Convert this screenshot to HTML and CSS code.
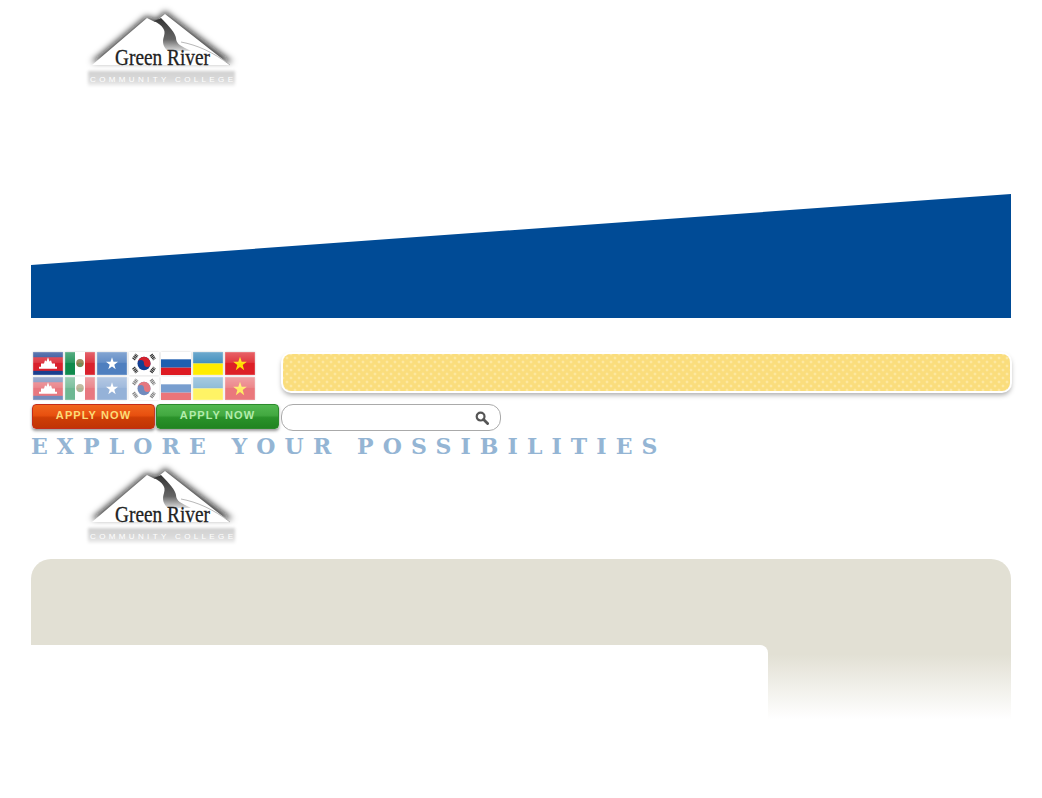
FILE: index.html
```html
<!DOCTYPE html>
<html lang="en">
  <head>
    <meta charset="UTF-8" />
    <title>Green River Community College</title>
    <link rel="stylesheet" href="styles.css">
  </head>
  <body>
    <svg class="defs" width="0" height="0">
      <defs>
        <filter id="logoshadow" x="-20%" y="-30%" width="140%" height="160%">
          <feGaussianBlur stdDeviation="3" />
        </filter>
        <filter id="soft" x="-10%" y="-10%" width="120%" height="120%">
          <feGaussianBlur stdDeviation="0.6" />
        </filter>
        <filter id="bandblur" x="-5%" y="-30%" width="110%" height="160%">
          <feGaussianBlur stdDeviation="1.6" />
        </filter>
        <linearGradient id="band" x1="0" y1="0" x2="0" y2="1">
          <stop offset="0" stop-color="#cfcfcf" />
          <stop offset=".7" stop-color="#dcdcdc" />
          <stop offset="1" stop-color="#f4f4f4" />
        </linearGradient>
        <linearGradient id="river" x1="0" y1="0" x2="0" y2="1">
          <stop offset="0" stop-color="#333" />
          <stop offset=".65" stop-color="#666" />
          <stop offset="1" stop-color="#ddd" />
        </linearGradient>
        <linearGradient id="gloss" x1="0" y1="0" x2="0" y2="1">
          <stop offset="0" stop-color="#fff" stop-opacity=".3" />
          <stop offset=".45" stop-color="#fff" stop-opacity=".12" />
          <stop offset=".5" stop-color="#fff" stop-opacity="0" />
        </linearGradient>
        <symbol id="logo" viewBox="0 0 160 90">
          <rect x="3" y="71" width="147" height="15" fill="url(#band)" filter="url(#bandblur)" />
          <path d="M6 62 L61 16 L72 19 L80 11 L148 62 Z" fill="#111" fill-opacity=".8" filter="url(#logoshadow)" />
          <path d="M7 65 L62 18 L70 22 L80 14 L145 65 Z" fill="#fff" />
          <path d="M69 21 C78 26 81 30 79 36 C77 42 78 47 83 51 L106 51 C96 46 91 44 91 38 C90 33 85 27 76 18 Z" fill="url(#river)" filter="url(#soft)" />
          <path d="M96 42 C112 45 128 52 145 65" fill="none" stroke="#999" stroke-width=".7" />
          <text class="logo-name" x="30" y="65" textLength="95" lengthAdjust="spacingAndGlyphs">Green River</text>
          <text class="logo-sub" x="5" y="82" textLength="143">COMMUNITY COLLEGE</text>
        </symbol>
        <symbol id="flag-kh" viewBox="0 0 30 22" preserveAspectRatio="none">
          <rect width="30" height="22" fill="#1a3f8f" />
          <rect y="5" width="30" height="13" fill="#d9202c" />
          <path d="M6 16 L6 14 L8 14 L8 11 L11 11 L12 8 L13.5 9 L15 5 L16.5 9 L18 8 L19 11 L22 11 L22 14 L24 14 L24 16 Z" fill="#fff" />
          <rect width="30" height="22" fill="url(#gloss)" stroke="#fff" stroke-opacity=".3" />
        </symbol>
        <symbol id="flag-mx" viewBox="0 0 30 22" preserveAspectRatio="none">
          <rect width="10" height="22" fill="#0f8a4c" />
          <rect x="10" width="10" height="22" fill="#fff" />
          <rect x="20" width="10" height="22" fill="#d9202c" />
          <circle cx="15" cy="10.5" r="3.8" fill="#8d7b4a" />
          <circle cx="15" cy="12.5" r="2" fill="#6c8f5a" />
          <rect width="30" height="22" fill="url(#gloss)" stroke="#fff" stroke-opacity=".3" />
        </symbol>
        <symbol id="flag-so" viewBox="0 0 30 22" preserveAspectRatio="none">
          <rect width="30" height="22" fill="#4f7fbf" />
          <path d="M15 5 L16.5 9.4 L21 9.4 L17.3 12.1 L18.7 16.5 L15 13.8 L11.3 16.5 L12.7 12.1 L9 9.4 L13.5 9.4 Z" fill="#fff" />
          <rect width="30" height="22" fill="url(#gloss)" stroke="#fff" stroke-opacity=".3" />
        </symbol>
        <symbol id="flag-kr" viewBox="0 0 30 22" preserveAspectRatio="none">
          <rect width="30" height="22" fill="#fff" />
          <circle cx="15" cy="11" r="6.5" fill="#123f94" />
          <path d="M8.5 11 A6.5 6.5 0 0 1 21.5 11 A3.25 3.25 0 0 1 15 11 A3.25 3.25 0 0 0 8.5 11 Z" fill="#d4202c" />
          <g stroke="#333" stroke-width="3.6" stroke-dasharray="1.2 .5">
            <path d="M4.5 7 L8 2.5" />
            <path d="M22 2.5 L25.5 7" />
            <path d="M4.5 15 L8 19.5" />
            <path d="M22 19.5 L25.5 15" />
          </g>
        </symbol>
        <symbol id="flag-ru" viewBox="0 0 30 22" preserveAspectRatio="none">
          <rect width="30" height="22" fill="#fff" />
          <rect y="7" width="30" height="8" fill="#1f5fb0" />
          <rect y="15" width="30" height="7" fill="#de1a22" />
        </symbol>
        <symbol id="flag-ua" viewBox="0 0 30 22" preserveAspectRatio="none">
          <rect width="30" height="11" fill="#2f84b8" />
          <rect y="11" width="30" height="11" fill="#ffec00" />
          <rect width="30" height="22" fill="url(#gloss)" stroke="#fff" stroke-opacity=".3" />
        </symbol>
        <symbol id="flag-vn" viewBox="0 0 30 22" preserveAspectRatio="none">
          <rect width="30" height="22" fill="#dd1f26" />
          <path d="M15 4.5 L16.7 9.3 L21.8 9.3 L17.7 12.4 L19.2 17.4 L15 14.4 L10.8 17.4 L12.3 12.4 L8.2 9.3 L13.3 9.3 Z" fill="#ffe100" />
          <rect width="30" height="22" fill="url(#gloss)" stroke="#fff" stroke-opacity=".3" />
        </symbol>
      </defs>
    </svg>

    <div class="page">
      <a class="logo" href="#"><svg width="160" height="90"><use href="#logo" /></svg></a>

      <svg class="wedge" width="980" height="124" viewBox="0 0 980 124">
        <polygon points="0,71 980,0 980,124 0,124" fill="#004b96" />
      </svg>

      <div class="tools">
        <div class="tools-left">
          <div class="flags">
            <svg class="flag"><use href="#flag-kh" /></svg>
            <svg class="flag"><use href="#flag-mx" /></svg>
            <svg class="flag"><use href="#flag-so" /></svg>
            <svg class="flag"><use href="#flag-kr" /></svg>
            <svg class="flag"><use href="#flag-ru" /></svg>
            <svg class="flag"><use href="#flag-ua" /></svg>
            <svg class="flag"><use href="#flag-vn" /></svg>
          </div>
          <div class="flags faded">
            <svg class="flag"><use href="#flag-kh" /></svg>
            <svg class="flag"><use href="#flag-mx" /></svg>
            <svg class="flag"><use href="#flag-so" /></svg>
            <svg class="flag"><use href="#flag-kr" /></svg>
            <svg class="flag"><use href="#flag-ru" /></svg>
            <svg class="flag"><use href="#flag-ua" /></svg>
            <svg class="flag"><use href="#flag-vn" /></svg>
          </div>
        </div>
        <div class="notice"></div>
      </div>

      <div class="actions">
        <a class="apply apply-orange" href="#">APPLY NOW</a>
        <a class="apply apply-green" href="#">APPLY NOW</a>
        <div class="search">
          <svg width="14" height="14" viewBox="0 0 14 14">
            <circle cx="5.6" cy="5.6" r="3.9" fill="none" stroke="#555" stroke-width="2.2" />
            <path d="M8.6 8.6 L12.6 12.6" stroke="#555" stroke-width="2.8" stroke-linecap="round" />
          </svg>
        </div>
      </div>

      <h2 class="tagline">EXPLORE YOUR POSSIBILITIES</h2>

      <a class="logo" href="#"><svg width="160" height="90"><use href="#logo" /></svg></a>

      <div class="panel">
        <div class="panel-top"></div>
        <div class="panel-body">
          <div class="panel-main"></div>
          <div class="panel-side"></div>
        </div>
      </div>
    </div>
  </body>
</html>
```

FILE: styles.css
```css
body {
  margin: 0;
  font-family: "Liberation Sans", Arial, sans-serif;
  background-color: #fff;
}

a {
  text-decoration: none;
}

.defs {
  display: block;
  height: 0;
}

.page {
  width: 980px;
  margin-left: 31px;
}

.logo {
  display: block;
  width: 160px;
  height: 90px;
  margin-left: 54px;
}

.logo svg {
  display: block;
}

.logo-name {
  font-family: "Liberation Serif", serif;
  font-size: 23px;
  fill: #222;
  stroke: #222;
  stroke-width: 0.3px;
}

.logo-sub {
  font-family: "Liberation Sans", Arial, sans-serif;
  font-size: 8px;
  fill: #fff;
}

.wedge {
  display: block;
  margin-top: 104px;
}

.tools {
  display: flex;
  margin-top: 34px;
}

.tools-left {
  width: 250px;
  padding-left: 2px;
  box-sizing: border-box;
}

.flags {
  display: flex;
  gap: 2px;
  height: 25px;
}

.faded {
  opacity: 0.6;
}

.flag {
  display: block;
  width: 30px;
  height: 23px;
  box-shadow: 0 0 2px #ccc;
}

.notice {
  width: 727px;
  height: 37px;
  margin: 2px 0 0 2px;
  border-radius: 8px;
  background-color: #fadd7c;
  background-image:
    radial-gradient(circle, #fde8a0 1px, transparent 1.8px),
    radial-gradient(circle, #fde8a0 1px, transparent 1.8px);
  background-size: 8px 8px;
  background-position: 0 0, 4px 4px;
  box-shadow: 0 0 0 2px #fff, 0 3px 5px 1px #aaa;
}

.actions {
  display: flex;
  align-items: flex-start;
  margin-top: 2px;
  padding-left: 1px;
}

.apply {
  display: block;
  width: 123px;
  height: 25px;
  margin-right: 1px;
  border-radius: 4px;
  font-size: 11px;
  font-weight: bold;
  letter-spacing: 1.1px;
  line-height: 21px;
  text-align: center;
  box-sizing: border-box;
  box-shadow: 0 2px 3px #999;
}

.apply-orange {
  color: #fbdc78;
  border: 1px solid #c42c1a;
  background: linear-gradient(#f0651e, #e8500f 45%, #cf3e06 55%, #c03405);
}

.apply-green {
  color: #b2ecab;
  border: 1px solid #2c8a2c;
  background: linear-gradient(#52b850, #42a840 45%, #2a922a 55%, #218421);
}

.search {
  display: flex;
  align-items: center;
  justify-content: flex-end;
  width: 220px;
  height: 27px;
  margin-left: 1px;
  padding-right: 11px;
  box-sizing: border-box;
  border: 1px solid #aaa;
  border-radius: 12px;
  background-color: #fff;
}

.tagline {
  margin: 4px 0 0;
  height: 22px;
  font-family: "DejaVu Serif", serif;
  font-size: 22px;
  font-weight: bold;
  line-height: 22px;
  letter-spacing: 9.1px;
  white-space: pre;
  color: #94b5d4;
}

.panel {
  margin-top: 12px;
  height: 164px;
}

.panel-top {
  height: 86px;
  border-radius: 20px 20px 0 0;
  background-color: #e2e0d4;
}

.panel-body {
  display: flex;
  height: 78px;
  background-image: linear-gradient(#e2e0d4 12%, #fff 95%);
}

.panel-main {
  width: 737px;
  height: 100%;
  background-color: #fff;
  border-top-right-radius: 8px;
}

.panel-side {
  flex: 1;
}
```
